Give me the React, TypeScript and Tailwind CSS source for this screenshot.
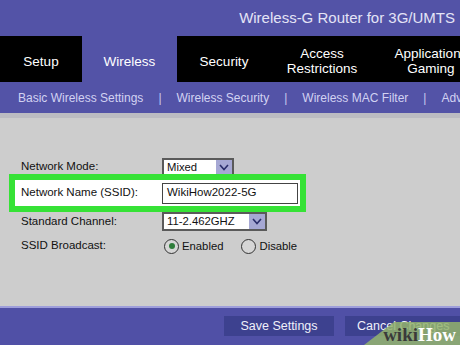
import React from "react";

const font = { fontFamily: '"Liberation Sans", Arial, sans-serif' };

const tabs = [
  { label: ["Setup"], w: "w-[82px]", active: false },
  { label: ["Wireless"], w: "w-[95px]", active: true },
  { label: ["Security"], w: "w-[94px]", active: false },
  { label: ["Access", "Restrictions"], w: "w-[102px]", active: false },
  { label: ["Applications", "Gaming"], w: "w-[116px]", active: false },
];

const subLinks = ["Basic Wireless Settings", "Wireless Security", "Wireless MAC Filter", "Advanced Wireless Settings"];

const Chevron = () => (
  <svg width="10" height="7" viewBox="0 0 10 7">
    <polyline points="1,1 5,5.5 9,1" fill="none" stroke="#2a2d6a" strokeWidth="1.6" />
  </svg>
);

const Select = ({ value, w }: { value: string; w: string }) => (
  <div className={`flex h-[19px] ${w} items-stretch border-2 border-[#5a5a5a] bg-white`}>
    <span className="flex flex-1 items-center pl-[3px] text-[11.3px] text-[#111]">{value}</span>
    <span className="flex w-[16px] items-center justify-center bg-[#a6a8d4]">
      <Chevron />
    </span>
  </div>
);

const Radio = ({ checked, label }: { checked: boolean; label: string }) => (
  <div className="flex items-center">
    <span className="flex h-[15px] w-[15px] items-center justify-center rounded-full border border-[#333] bg-[#d6d6d6]">
      {checked && <span className="h-[6px] w-[6px] rounded-full bg-[#2e7d3a]" />}
    </span>
    <span className="ml-[3px] text-[11.3px] text-[#111]">{label}</span>
  </div>
);

export default function App() {
  return (
    <div className="relative flex h-[345px] w-[460px] flex-col overflow-hidden bg-[#5353a7]" style={font}>
      {/* title bar */}
      <div className="flex h-[36px] items-center justify-end pr-[5px] text-[15px] text-[#e4e4f6]">
        Wireless-G Router for 3G/UMTS
      </div>

      {/* main tabs */}
      <div className="flex h-[46px] bg-black">
        {tabs.map((t) => (
          <div
            key={t.label[0]}
            className={`flex shrink-0 flex-col items-center justify-center pt-[4px] text-[13.5px] leading-[15px] text-white ${t.w} ${
              t.active ? "bg-[#5353a7] text-[#eeeefa]" : ""
            }`}
          >
            {t.label.map((l) => (
              <span key={l} className="whitespace-nowrap">{l}</span>
            ))}
          </div>
        ))}
      </div>

      {/* sub navigation */}
      <div className="flex h-[31px] items-center whitespace-nowrap pl-[18px] text-[12px] text-[#d2d2f2]">
        {subLinks.map((s, i) => (
          <React.Fragment key={s}>
            {i > 0 && <span className="mx-[15px] text-[#c8c8ee]">|</span>}
            <span>{s}</span>
          </React.Fragment>
        ))}
      </div>

      {/* content */}
      <div className="flex flex-1 flex-col border-t-[5px] border-[#bcbcc2] bg-[#cdcdcd] pt-[40px] text-[11.5px] text-[#111]">
        <div className="flex h-[18px] items-center pl-[21px]">
          <span className="w-[141px]">Network Mode:</span>
          <Select value="Mixed" w="w-[72px]" />
        </div>

        <div className="-mt-[2px] ml-[9px] flex h-[38px] w-[297px] items-center border-[6px] border-[#36e236] bg-white pl-[6px]">
          <span className="w-[141px]">Network Name (SSID):</span>
          <div className="flex h-[21px] w-[136px] items-center border border-[#444] pl-[4px] text-[11.5px]">
            WikiHow2022-5G
          </div>
        </div>

        <div className="flex h-[19px] items-center pl-[21px]">
          <span className="w-[141px]">Standard Channel:</span>
          <Select value="11-2.462GHZ" w="w-[105px]" />
        </div>

        <div className="mt-[7px] flex h-[16px] items-center pl-[21px]">
          <span className="w-[143px]">SSID Broadcast:</span>
          <Radio checked label="Enabled" />
          <div className="ml-[18px]">
            <Radio checked={false} label="Disable" />
          </div>
        </div>
      </div>

      {/* footer */}
      <div className="flex h-[39px] items-start gap-[11px] border-t-2 border-[#9e9edb] bg-[#5050a6] pl-[224px] pt-[8px]">
        <div className="flex h-[20px] w-[110px] shrink-0 items-center justify-center bg-[#3d418f] text-[12.5px] text-[#f0f0fa]">
          Save Settings
        </div>
        <div className="flex h-[20px] w-[120px] shrink-0 items-center justify-start bg-[#3d418f] pl-[12px] text-[12.5px] text-[#f0f0fa]">
          Cancel Changes
        </div>
      </div>

      {/* wikiHow watermark */}
      <div className="pointer-events-none absolute bottom-0 right-0 h-[23px] w-[96px]">
        <svg className="absolute inset-0" width="96" height="23" viewBox="0 0 96 23">
          <polygon points="0,23 30,0 96,0 96,23" fill="#93b46c" fillOpacity="0.85" />
        </svg>
        <div
          className="absolute bottom-[1px] right-[4px] whitespace-nowrap text-[19px] font-bold leading-[19px]"
          style={{ fontFamily: '"Liberation Serif", "Times New Roman", serif' }}
        >
          <span className="text-[#3a3a3a]">wiki</span>
          <span className="text-white">How</span>
        </div>
      </div>
    </div>
  );
}
